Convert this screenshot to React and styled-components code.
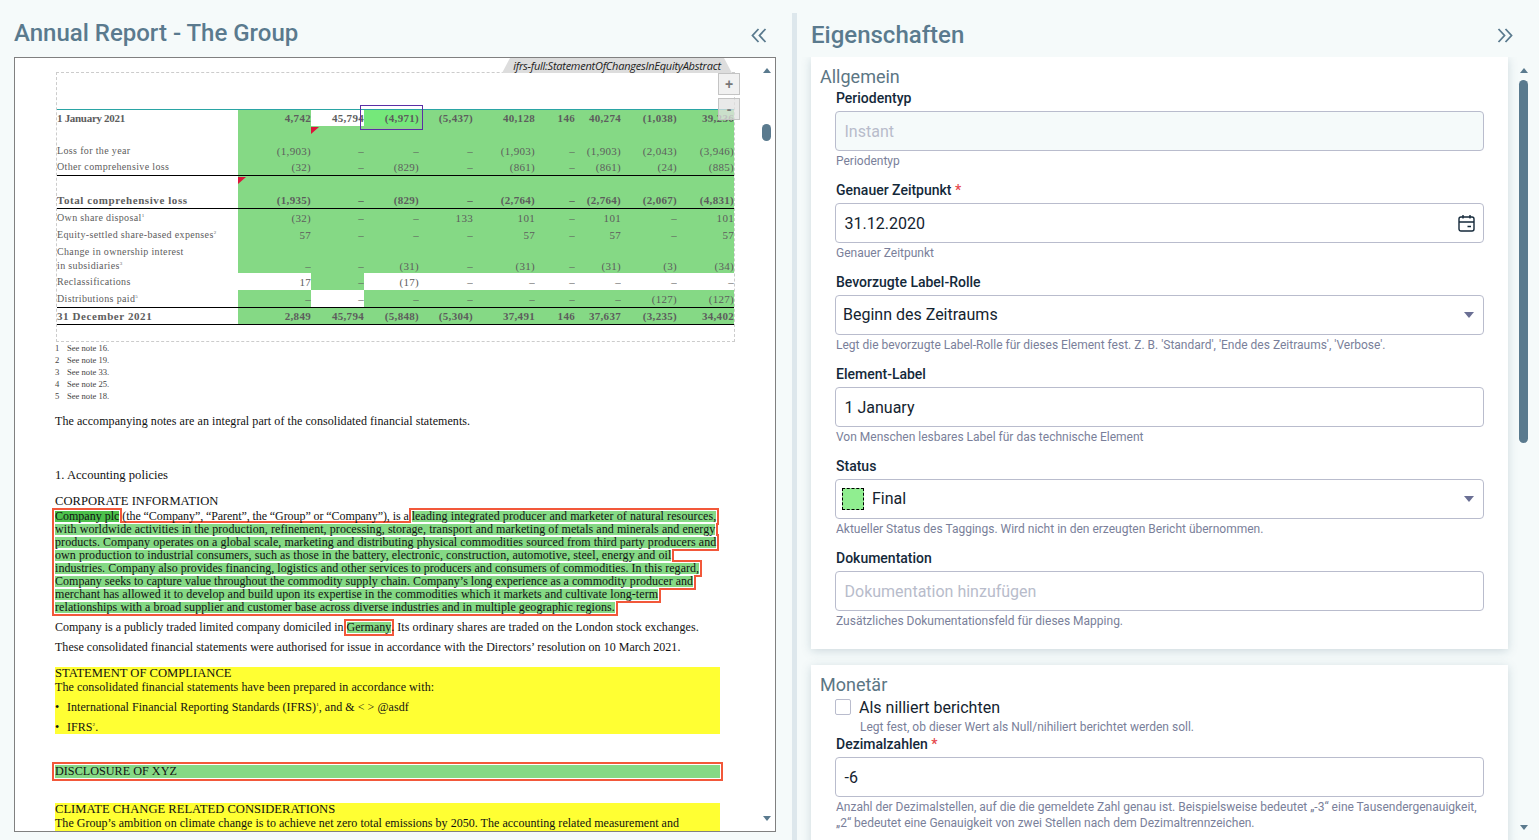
import React from "react";
import styled, { createGlobalStyle } from "styled-components";

const GlobalStyle = createGlobalStyle`
  html, body {
    margin: 0;
    height: 100%;
    overflow: hidden;
    background: #f5fafa;
    font-family: Roboto, "Noto Sans", sans-serif;
  }
  #root { height: 100%; }
`;

const Page = styled.div`
  display: flex;
  height: 840px;
`;

const LeftPane = styled.section`
  width: 792px;
  flex: none;
  box-sizing: border-box;
  padding: 0 16px 0 14px;
`;

const Splitter = styled.div`
  width: 5px;
  flex: none;
  margin-top: 13px;
  background: #dde7ec;
`;

const RightPane = styled.section`
  flex: 1;
  min-width: 0;
  box-sizing: border-box;
  padding-left: 4px;
  display: flex;
  flex-direction: column;
`;

const PaneHeader = styled.header`
  height: 57px;
  flex: none;
  box-sizing: border-box;
  display: flex;
  align-items: center;
  justify-content: space-between;
  padding: ${(p) => p.$pad};
`;

const PaneTitle = styled.h1`
  margin: 0;
  font-size: 24px;
  line-height: 30px;
  font-weight: 500;
  color: #5a7a8e;
`;

const ChevronSvg = styled.svg`
  flex: none;
  margin-top: ${(p) => p.$top || 0}px;
`;

const Frame = styled.div`
  height: 775px;
  box-sizing: border-box;
  border: 1px solid #808080;
  background: #fff;
  display: flex;
`;

const Doc = styled.div`
  flex: 1;
  min-width: 0;
  overflow: hidden;
  padding-left: 40px;
  font-family: "Liberation Serif", serif;
  color: #111;
`;

const Rail = styled.div`
  flex: none;
  width: ${(p) => p.$width}px;
  margin-left: ${(p) => p.$left || 0}px;
  display: flex;
  flex-direction: column;
  align-items: center;
`;

const ArrowUp = styled.div`
  width: 0;
  height: 0;
  flex: none;
  margin-top: ${(p) => p.$top}px;
  border-left: 4.5px solid transparent;
  border-right: 4.5px solid transparent;
  border-bottom: 5px solid #5a7a8e;
`;

const ArrowDown = styled.div`
  width: 0;
  height: 0;
  flex: none;
  margin-top: auto;
  margin-bottom: ${(p) => p.$bottom}px;
  border-left: 4.5px solid transparent;
  border-right: 4.5px solid transparent;
  border-top: 5px solid #5a7a8e;
`;

const Thumb = styled.div`
  width: 9px;
  flex: none;
  height: ${(p) => p.$h}px;
  margin-top: ${(p) => p.$top}px;
  border-radius: 5px;
  background: #5a7a8e;
`;

/* tagged financial table */
const TagBox = styled.div`
  position: relative;
  width: 677px;
  margin: 15px 0 0 2px;
  padding: 36px 0 16px;
  outline: 1px dashed #ccc;
`;

const TagLabel = styled.div`
  position: absolute;
  right: 2px;
  bottom: 100%;
  height: 15px;
  width: 230px;
  background: #ddd;
  clip-path: polygon(8px 0, calc(100% - 8px) 0, 100% 100%, 0 100%);
  font: italic 11px/15px "Open Sans", sans-serif;
  letter-spacing: -0.24px;
  color: #222;
  text-align: center;
  white-space: nowrap;
`;

const ZoomButton = styled.div`
  position: absolute;
  z-index: 2;
  left: 661px;
  top: ${(p) => p.$top}px;
  width: 20px;
  height: 20px;
  border: 1px solid #c4c4c4;
  background: ${(p) => (p.$faded ? "rgba(225,225,225,.75)" : "#f1f1f1")};
  color: #777;
  font: bold 14px/20px "Liberation Sans", sans-serif;
  text-align: center;
`;

const Table = styled.div`
  border-top: 1px solid #2aa5a5;
  font-size: 11px;
  letter-spacing: 0.3px;
  color: #5d5d5d;
`;

const Row = styled.div`
  display: grid;
  grid-template-columns: 181px 73px 53px 55px 54px 62px 40px 46px 56px 57px;
  height: ${(p) => p.$h}px;
  border-bottom: ${(p) => (p.$rule ? "1px solid #000" : "0")};
  font-weight: ${(p) => (p.$bold ? 700 : 400)};
`;

const LabelCell = styled.div`
  display: flex;
  align-items: ${(p) => (p.$end ? "flex-end" : "center")};
  line-height: 14px;
  white-space: pre-line;
  font-size: ${(p) => (p.$bold ? 11 : 10)}px;
  letter-spacing: ${(p) => p.$track}px;
`;

const Cell = styled.div`
  position: relative;
  display: flex;
  align-items: ${(p) => (p.$end ? "flex-end" : "center")};
  justify-content: flex-end;
  line-height: 14px;
  white-space: nowrap;
  background: ${(p) => (p.$plain ? "#fff" : p.$active ? "#75e87a" : "#85d985")};
`;

const Selection = styled.div`
  position: absolute;
  z-index: 1;
  left: -4px;
  right: -4px;
  top: -5px;
  bottom: -4px;
  border: 1px solid #5b2ea6;
`;

const Flag = styled.div`
  position: absolute;
  left: 0;
  top: ${(p) => p.$top}px;
  width: 8px;
  height: 7px;
  background: #dc143c;
  clip-path: polygon(0 0, 100% 0, 0 100%);
`;

const Note = styled.sup`
  font-size: 5px;
  line-height: 0;
`;

const Footnotes = styled.div`
  margin: 1px 0 13px;
`;

const Footnote = styled.div`
  display: flex;
  height: 12px;
  font-size: 8.6px;
  line-height: 12px;
  color: #444;
  & > span:first-child { width: 12px; }
`;

const Para = styled.div`
  font-size: ${(p) => (p.$head ? 12.6 : 12)}px;
  line-height: 13px;
  margin-top: ${(p) => p.$top || 0}px;
  letter-spacing: ${(p) => p.$track || 0}px;
  white-space: nowrap;
`;

const Tagged = styled.div`
  isolation: isolate;
  position: relative;
  margin-top: ${(p) => p.$top || 0}px;
`;

const Mark = styled.span`
  position: relative;
  display: ${(p) => (p.$full ? "block" : "inline-block")};
  height: ${(p) => (p.$full ? 13 : 11)}px;
  line-height: ${(p) => (p.$full ? 13 : 11)}px;
  letter-spacing: ${(p) => p.$track || 0}px;
  background: ${(p) => (p.$strong ? "#4cc14c" : "#85d985")};
  &::after {
    content: "";
    position: absolute;
    inset: -1px;
    background: #fff;
    z-index: -1;
  }
  &::before {
    content: "";
    position: absolute;
    inset: -3px;
    background: #f2583a;
    z-index: -2;
  }
`;

const Plain = styled.span`
  letter-spacing: ${(p) => p.$track || 0}px;
`;

const MarkLine = styled.div`
  height: 13px;
  line-height: 13px;
  font-size: ${(p) => (p.$head ? 12.2 : 12)}px;
  margin-top: ${(p) => p.$top || 0}px;
  white-space: nowrap;
`;

const Yellow = styled.div`
  width: 665px;
  background: #ffff33;
  margin-top: ${(p) => p.$top}px;
  padding-bottom: ${(p) => p.$bottom || 0}px;
`;

const BulletLine = styled.div`
  display: flex;
  font-size: 12px;
  line-height: 13px;
  margin-top: 7px;
  letter-spacing: 0.05px;
  & > span:first-child { width: 12px; }
`;

const Banner = styled.div`
  isolation: isolate;
  width: 665px;
  margin-top: 31px;
`;

/* form side */
const CardColumn = styled.div`
  flex: none;
  width: 717px;
  overflow: hidden;
  padding: 0 10px;
  box-sizing: border-box;
  display: flex;
  flex-direction: column;
  gap: 16px;
`;

const Body = styled.div`
  flex: 1;
  min-height: 0;
  display: flex;
`;

const Card = styled.div`
  flex: none;
  background: #fff;
  box-shadow: 0 2px 9px rgba(90, 122, 142, 0.25);
  padding: 8px 24px 20px 9px;
`;

const CardTitle = styled.h2`
  margin: 0;
  font-size: 18px;
  line-height: 23px;
  font-weight: 400;
  color: #5c7684;
`;

const Fields = styled.div`
  margin-left: 15px;
  display: flex;
  flex-direction: column;
  gap: 11px;
`;

const Field = styled.div`
  display: flex;
  flex-direction: column;
`;

const FieldLabel = styled.label`
  font-size: 14px;
  line-height: 20px;
  font-weight: 500;
  color: #14293a;
  margin-bottom: 3px;
  padding-left: 1px;
`;

const Star = styled.span`
  color: #e5484d;
`;

const InputBox = styled.div`
  height: 40px;
  box-sizing: border-box;
  border: 1px solid #b9bccd;
  border-radius: 4px;
  background: ${(p) => (p.$disabled ? "#f5fafa" : "#fff")};
  display: flex;
  align-items: center;
  gap: 8px;
  padding: 0 7px ${(p) => (p.$select ? 1 : 0)}px ${(p) => (p.$select ? 7 : 8.5)}px;
  font-size: 16px;
  color: ${(p) => (p.$muted ? "#b8bccb" : "#14232f")};
`;

const Help = styled.div`
  font-size: 12px;
  line-height: 16px;
  margin-top: 2px;
  padding-left: 1px;
  color: #7a7f9a;
`;

const Caret = styled.div`
  margin-left: auto;
  margin-right: 2px;
  width: 0;
  height: 0;
  border-left: 5px solid transparent;
  border-right: 5px solid transparent;
  border-top: 6px solid #6a6f94;
`;

const Swatch = styled.div`
  width: 20px;
  height: 20px;
  margin-left: -1px;
  border: 1px dashed #000;
  background: #90ee90;
`;

const CheckRow = styled.div`
  display: flex;
  align-items: center;
  gap: 8px;
  height: 20px;
  margin-top: 1px;
  font-size: 16px;
  color: #14232f;
`;

const CheckBox = styled.div`
  width: 16px;
  height: 16px;
  border: 1px solid #b9bccd;
  border-radius: 2px;
  background: #fff;
  box-sizing: border-box;
`;

const CheckHelp = styled(Help)`
  margin: 2px 0 -1px 25px;
  padding: 0;
`;

const CalendarSvg = styled.svg`
  margin-left: auto;
  margin-right: 1px;
`;

const Collapse = ({ dir, top }) => (
  <ChevronSvg $top={top} width="16" height="15" viewBox="0 0 16 15" fill="none" stroke="#5a7a8e" strokeWidth="1.8">
    <path d={dir === "left" ? "M7.5 1 L1.5 7.5 L7.5 14 M14.5 1 L8.5 7.5 L14.5 14" : "M1.5 1 L7.5 7.5 L1.5 14 M8.5 1 L14.5 7.5 L8.5 14"} />
  </ChevronSvg>
);

const CalendarIcon = () => (
  <CalendarSvg width="17" height="18" viewBox="0 0 17 18" fill="none" stroke="#14293a" strokeWidth="1.4">
    <rect x="1" y="3" width="15" height="14" rx="2" />
    <path d="M1 8 H16 M5 1 V4.5 M12 1 V4.5 M9.5 12.5 H13" />
  </CalendarSvg>
);

const rows = [
  { label: "1 January 2021", track: -0.3, h: 16, bold: true, values: ["4,742", "45,794", "(4,971)", "(5,437)", "40,128", "146", "40,274", "(1,038)", "39,236"], plain: [1], active: 2, select: 2 },
  { label: "", h: 17, values: ["", "", "", "", "", "", "", "", ""], flag: { col: 1, top: 1 } },
  { label: "Loss for the year", h: 16, values: ["(1,903)", "–", "–", "–", "(1,903)", "–", "(1,903)", "(2,043)", "(3,946)"] },
  { label: "Other comprehensive loss", h: 16, rule: true, values: ["(32)", "–", "(829)", "–", "(861)", "–", "(861)", "(24)", "(885)"] },
  { label: "", h: 16, values: ["", "", "", "", "", "", "", "", ""], flag: { col: 0, top: 1 } },
  { label: "Total comprehensive loss", track: 0.58, h: 16, bold: true, rule: true, values: ["(1,935)", "–", "(829)", "–", "(2,764)", "–", "(2,764)", "(2,067)", "(4,831)"] },
  { label: "Own share disposal", note: "1", h: 17, values: ["(32)", "–", "–", "133", "101", "–", "101", "–", "101"] },
  { label: "Equity-settled share-based expenses", note: "2", h: 17, values: ["57", "–", "–", "–", "57", "–", "57", "–", "57"] },
  { label: "Change in ownership interest\nin subsidiaries", note: "3", h: 30, end: true, values: ["–", "–", "(31)", "–", "(31)", "–", "(31)", "(3)", "(34)"] },
  { label: "Reclassifications", h: 17, values: ["17", "–", "(17)", "–", "–", "–", "–", "–", "–"], plain: [0, 2, 3, 4, 5, 6, 7, 8] },
  { label: "Distributions paid", note: "5", h: 17, rule: true, values: ["–", "–", "–", "–", "–", "–", "–", "(127)", "(127)"], plain: [1] },
  { label: "31 December 2021", track: 0.58, h: 16, bold: true, rule: true, values: ["2,849", "45,794", "(5,848)", "(5,304)", "37,491", "146", "37,637", "(3,235)", "34,402"] },
];

const notes = ["See note 16.", "See note 19.", "See note 33.", "See note 25.", "See note 18."];

function FinancialTable() {
  return (
    <TagBox>
      <TagLabel>ifrs-full:StatementOfChangesInEquityAbstract</TagLabel>
      <ZoomButton $top={0}>+</ZoomButton>
      <ZoomButton $top={25} $faded>-</ZoomButton>
      <Table>
        {rows.map((row, i) => (
          <Row key={i} $h={row.h} $rule={row.rule} $bold={row.bold}>
            <LabelCell $end={row.end} $bold={row.bold} $track={row.track ?? 0.35}>
              <span>
                {row.label}
                {row.note && <Note>{row.note}</Note>}
              </span>
            </LabelCell>
            {row.values.map((value, col) => (
              <Cell key={col} $end={row.end} $plain={row.plain?.includes(col)} $active={row.active === col}>
                {value}
                {row.select === col && <Selection />}
                {row.flag?.col === col && <Flag $top={row.flag.top} />}
              </Cell>
            ))}
          </Row>
        ))}
      </Table>
    </TagBox>
  );
}

function Document() {
  return (
    <Doc>
      <FinancialTable />
      <Footnotes>
        {notes.map((note, i) => (
          <Footnote key={note}>
            <span>{i + 1}</span>
            <span>{note}</span>
          </Footnote>
        ))}
      </Footnotes>
      <Para $track={0.07}>The accompanying notes are an integral part of the consolidated financial statements.</Para>
      <Para $top={41} $head>1. Accounting policies</Para>
      <Para $top={13} $head>CORPORATE INFORMATION</Para>
      <Tagged $top={2}>
        <MarkLine>
          <Mark $strong>Company plc</Mark> <Plain $track={-0.08}>(the “Company”, “Parent”, the “Group” or “Company”), is a</Plain> <Mark $track={0.1}>leading integrated producer and marketer of natural resources,</Mark>
        </MarkLine>
        <MarkLine><Mark $track={0.067}>with worldwide activities in the production, refinement, processing, storage, transport and marketing of metals and minerals and energy</Mark></MarkLine>
        <MarkLine><Mark $track={0.07}>products. Company operates on a global scale, marketing and distributing physical commodities sourced from third party producers and</Mark></MarkLine>
        <MarkLine><Mark $track={0.076}>own production to industrial consumers, such as those in the battery, electronic, construction, automotive, steel, energy and oil</Mark></MarkLine>
        <MarkLine><Mark $track={0.045}>industries. Company also provides financing, logistics and other services to producers and consumers of commodities. In this regard,</Mark></MarkLine>
        <MarkLine><Mark $track={0.024}>Company seeks to capture value throughout the commodity supply chain. Company’s long experience as a commodity producer and</Mark></MarkLine>
        <MarkLine><Mark $track={0.056}>merchant has allowed it to develop and build upon its expertise in the commodities which it markets and cultivate long-term</Mark></MarkLine>
        <MarkLine><Mark $track={0.076}>relationships with a broad supplier and customer base across diverse industries and in multiple geographic regions.</Mark></MarkLine>
        <MarkLine $top={7}>
          Company is a publicly traded limited company domiciled in <Mark>Germany</Mark>. <Plain $track={0.08}>Its ordinary shares are traded on the London stock exchanges.</Plain>
        </MarkLine>
      </Tagged>
      <Para $top={7} $track={0.03}>These consolidated financial statements were authorised for issue in accordance with the Directors’ resolution on 10 March 2021.</Para>
      <Yellow $top={13}>
        <Para $head>STATEMENT OF COMPLIANCE</Para>
        <Para $top={1} $track={0.065}>The consolidated financial statements have been prepared in accordance with:</Para>
        <BulletLine>
          <span>•</span>
          <span>International Financial Reporting Standards (IFRS)<Note>1</Note>, and &amp; &lt; &gt; @asdf</span>
        </BulletLine>
        <BulletLine>
          <span>•</span>
          <span>IFRS<Note>2</Note>.</span>
        </BulletLine>
      </Yellow>
      <Banner>
        <Tagged>
          <MarkLine $head>
            <Mark $full>DISCLOSURE OF XYZ</Mark>
          </MarkLine>
        </Tagged>
      </Banner>
      <Yellow $top={25} $bottom={40}>
        <Para $head>CLIMATE CHANGE RELATED CONSIDERATIONS</Para>
        <Para $top={1} $track={0.03}>The Group’s ambition on climate change is to achieve net zero total emissions by 2050. The accounting related measurement and</Para>
        <Para $track={0.03}>disclosure assessments impacted by climate are considered as part of the preparation of the consolidated financial statements and</Para>
      </Yellow>
    </Doc>
  );
}

const generalFields = [
  { label: "Periodentyp", value: "Instant", disabled: true, muted: true, help: "Periodentyp" },
  { label: "Genauer Zeitpunkt", required: true, value: "31.12.2020", icon: <CalendarIcon />, help: "Genauer Zeitpunkt" },
  { label: "Bevorzugte Label-Rolle", value: "Beginn des Zeitraums", select: true, help: "Legt die bevorzugte Label-Rolle für dieses Element fest. Z. B. 'Standard', 'Ende des Zeitraums', 'Verbose'." },
  { label: "Element-Label", value: "1 January", help: "Von Menschen lesbares Label für das technische Element" },
  { label: "Status", value: "Final", select: true, swatch: true, help: "Aktueller Status des Taggings. Wird nicht in den erzeugten Bericht übernommen." },
  { label: "Dokumentation", value: "Dokumentation hinzufügen", muted: true, help: "Zusätzliches Dokumentationsfeld für dieses Mapping." },
];

function FormField({ field }) {
  return (
    <Field>
      <FieldLabel>
        {field.label}
        {field.required && <Star> *</Star>}
      </FieldLabel>
      <InputBox $disabled={field.disabled} $muted={field.muted} $select={field.select}>
        {field.swatch && <Swatch />}
        <span>{field.value}</span>
        {field.icon}
        {field.select && <Caret />}
      </InputBox>
      <Help>{field.help}</Help>
    </Field>
  );
}

export default function App() {
  return (
    <>
      <GlobalStyle />
      <Page>
        <LeftPane>
          <PaneHeader $pad="12px 9px 3px 0">
            <PaneTitle>Annual Report - The Group</PaneTitle>
            <Collapse dir="left" top={4} />
          </PaneHeader>
          <Frame>
            <Document />
            <Rail $width={17}>
              <ArrowUp $top={10} />
              <Thumb $top={51} $h={17} />
              <ArrowDown $bottom={10} />
            </Rail>
          </Frame>
        </LeftPane>
        <Splitter />
        <RightPane>
          <PaneHeader $pad="14px 26px 1px 10px">
            <PaneTitle>Eigenschaften</PaneTitle>
            <Collapse dir="right" />
          </PaneHeader>
          <Body>
            <CardColumn>
              <Card>
                <CardTitle>Allgemein</CardTitle>
                <Fields>
                  {generalFields.map((field) => (
                    <FormField key={field.label} field={field} />
                  ))}
                </Fields>
              </Card>
              <Card>
                <CardTitle>Monetär</CardTitle>
                <Fields>
                  <Field>
                    <CheckRow>
                      <CheckBox />
                      Als nilliert berichten
                    </CheckRow>
                    <CheckHelp>Legt fest, ob dieser Wert als Null/nihiliert berichtet werden soll.</CheckHelp>
                    <FieldLabel>
                      Dezimalzahlen<Star> *</Star>
                    </FieldLabel>
                    <InputBox>
                      <span>-6</span>
                    </InputBox>
                    <Help>
                      Anzahl der Dezimalstellen, auf die die gemeldete Zahl genau ist. Beispielsweise bedeutet „-3“ eine Tausendergenauigkeit,
                      <br />
                      „2“ bedeutet eine Genauigkeit von zwei Stellen nach dem Dezimaltrennzeichen.
                    </Help>
                  </Field>
                </Fields>
              </Card>
            </CardColumn>
            <Rail $width={9} $left={1}>
              <ArrowUp $top={11} />
              <Thumb $top={7} $h={363} />
              <ArrowDown $bottom={10} />
            </Rail>
          </Body>
        </RightPane>
      </Page>
    </>
  );
}
